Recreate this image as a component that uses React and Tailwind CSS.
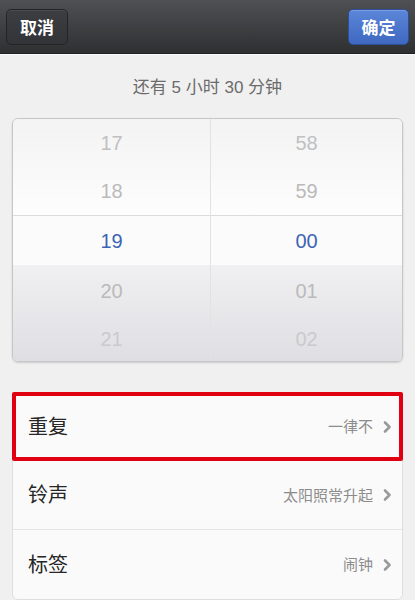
import React from 'react';

const hours = ['17', '18', '19', '20', '21'];
const minutes = ['58', '59', '00', '01', '02'];

const settings = [
    { label: '重复', value: '一律不', marked: true },
    { label: '铃声', value: '太阳照常升起' },
    { label: '标签', value: '闹钟' },
];

const Chevron = () => (
    <svg width="10" height="14" viewBox="0 0 10 14" className="ml-[9px]">
        <path d="M3 2.5 L7.5 7 L3 11.5" fill="none" stroke="#9a9a9a" strokeWidth="2.6" strokeLinecap="round" strokeLinejoin="round" />
    </svg>
);

const PickerColumn = ({ items, className }) => (
    <div className={`flex flex-col ${className}`}>
        {items.map((n, i) => {
            const selected = i === 2;
            // middle band is a little taller than the others
            const h = selected ? 'h-[52px]' : 'h-[48px]';
            let color = 'text-[#bababa]';
            if (selected) color = 'text-[#3c64b4]';
            if (i === 0) color = 'text-[#c0c0c0]';
            if (i === 4) color = 'text-[#cacacc]';
            return (
                <div key={n} className={`${h} flex items-center justify-center text-[20px] ${color}`}>
                    {n}
                </div>
            );
        })}
    </div>
);

const App = () => {
    return (
        <div className="w-[415px] h-[600px] overflow-hidden bg-[#f0f0f0] flex flex-col" style={{ fontFamily: '"Liberation Sans", "Noto Sans CJK SC", sans-serif' }}>
            {/* top bar */}
            <div className="h-[54px] shrink-0 bg-gradient-to-b from-[#4f5053] to-[#2f3032] border-b border-[#1f2022] flex items-center justify-between px-[6px]">
                <button className="h-[36px] w-[62px] rounded-[5px] bg-gradient-to-b from-[#3d3e41] to-[#333437] border border-[#232426] shadow-[inset_0_1px_0_rgba(255,255,255,0.08)] text-white text-[17px] font-bold" style={{ fontFamily: '"Noto Sans CJK SC", sans-serif' }}>
                    取消
                </button>
                <button className="h-[36px] w-[61px] rounded-[5px] bg-gradient-to-b from-[#5b86d9] to-[#3f68c0] border border-[#2c4f99] shadow-[inset_0_1px_0_rgba(255,255,255,0.2)] text-white text-[17px] font-bold" style={{ fontFamily: '"Noto Sans CJK SC", sans-serif' }}>
                    确定
                </button>
            </div>
            <div className="h-px bg-[#fdfdfd]" />

            <div className="h-[63px] pt-[2px] flex items-center justify-center text-[17px] text-[#6b6b6b]">
                还有 5 小时 30 分钟
            </div>

            {/* time picker */}
            <div className="mx-[12px] h-[244px] shrink-0 rounded-[6px] border border-[#c6c6c8] shadow-[0_1px_2px_rgba(0,0,0,0.15)] overflow-hidden flex flex-col relative">
                <div className="absolute inset-x-0 top-0 h-[96px] bg-gradient-to-b from-[#f3f3f4] to-[#fdfdfd]" />
                <div className="absolute inset-x-0 top-[96px] h-[52px] bg-[#fbfbfb] border-y border-[#dcdcde]" />
                <div className="absolute inset-x-0 bottom-0 h-[96px] bg-gradient-to-b from-[#f0f0f2] to-[#dfdfe3]" />
                <div className="relative flex flex-1">
                    <PickerColumn items={hours} className="w-[198px] border-r border-[#e2e2e4]" />
                    <PickerColumn items={minutes} className="flex-1" />
                </div>
            </div>

            {/* settings list */}
            <div className="mx-[12px] mt-[30px] rounded-[6px] bg-[#fafafa] border border-[#dedede] flex flex-col">
                {settings.map((s, i) => (
                    <div
                        key={s.label}
                        className={`h-[69px] flex items-center justify-between ${s.marked ? 'border-[4px] border-[#e00012] -mx-[1px] -mt-[1px] pl-[12px] pr-[7px] rounded-[2px]' : 'pl-[15px] pr-[10px]'} ${i === 1 ? 'border-b border-[#e4e4e4]' : ''}`}
                        style={{ fontFamily: '"Noto Sans CJK SC", sans-serif' }}
                    >
                        <span className="text-[20px] text-[#262626] -mt-[2px]">{s.label}</span>
                        <span className="flex items-center text-[15px] text-[#8c8c8c]">
                            {s.value}
                            <Chevron />
                        </span>
                    </div>
                ))}
            </div>
        </div>
    );
};

export default App;
